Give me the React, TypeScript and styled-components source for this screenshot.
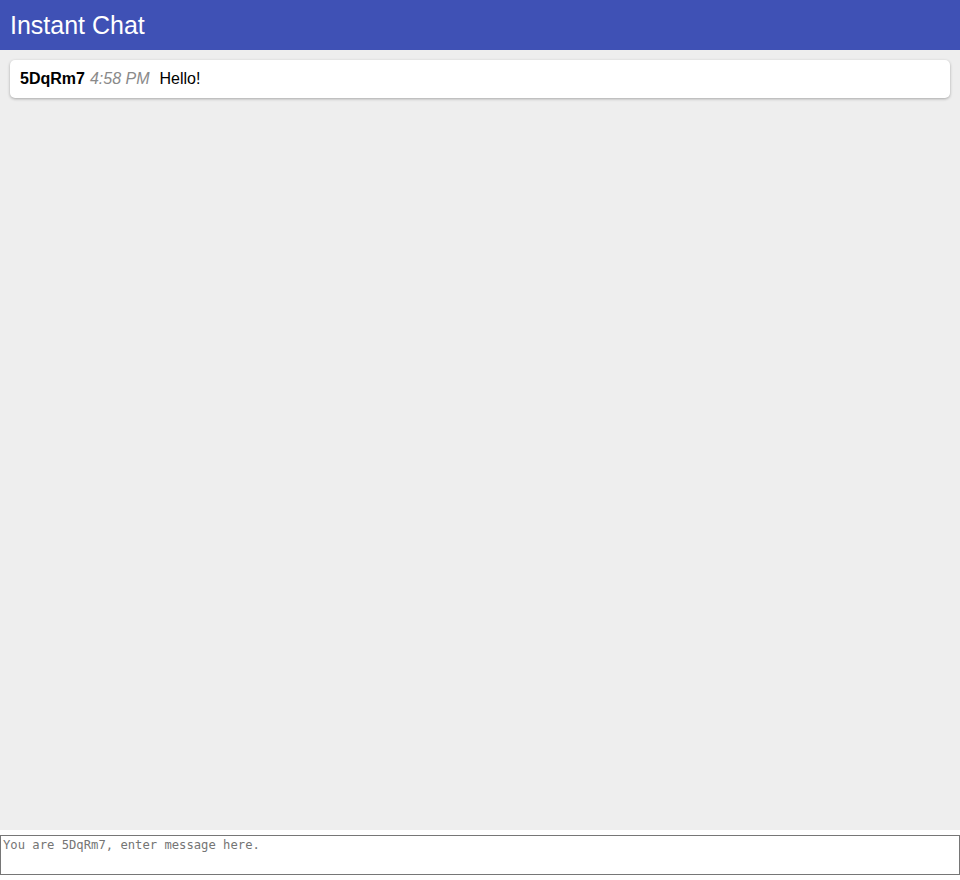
import { createGlobalStyle } from "styled-components";
import styled from "styled-components";

const GlobalStyle = createGlobalStyle`
  html, body {
    margin: 0;
    padding: 0;
    background: #ffffff;
  }
  body {
    font-family: "Liberation Sans", Arial, sans-serif;
  }
`;

const Page = styled.div`
  display: flex;
  flex-direction: column;
  height: 880px;
  width: 960px;
`;

const Header = styled.header`
  height: 50px;
  flex-shrink: 0;
  background: #3f51b5;
  color: #ffffff;
  font-size: 25px;
  line-height: 50px;
  padding: 0 10px;
`;

const Messages = styled.div`
  flex: 1;
  background: #eeeeee;
  padding: 10px;
  display: flex;
  flex-direction: column;
  gap: 10px;
`;

const Message = styled.div`
  background: #ffffff;
  border-radius: 5px;
  box-shadow: 0 1px 3px rgba(0, 0, 0, 0.3);
  padding: 10px;
  font-size: 16px;
  line-height: 18px;
  color: #000000;
  display: flex;
  align-items: baseline;
`;

const Author = styled.span`
  font-weight: bold;
  margin-right: 5px;
`;

const Time = styled.span`
  font-style: italic;
  color: #8a8a8a;
  margin-right: 10px;
`;

const Footer = styled.div`
  flex-shrink: 0;
  padding: 5px 0;
  display: flex;
`;

const Input = styled.textarea`
  box-sizing: border-box;
  width: 960px;
  height: 40px;
  margin: 0;
  padding: 2px;
  border: 1px solid #767676;
  resize: none;
  font-family: "DejaVu Sans Mono", monospace;
  font-size: 12.2px;
  &::placeholder {
    color: #757575;
  }
`;

const messages = [{ author: "5DqRm7", time: "4:58 PM", text: "Hello!" }];

const App = () => {
  return (
    <Page>
      <GlobalStyle />
      <Header>Instant Chat</Header>
      <Messages>
        {messages.map((m, i) => (
          <Message key={i}>
            <Author>{m.author}</Author>
            <Time>{m.time}</Time>
            <span>{m.text}</span>
          </Message>
        ))}
      </Messages>
      <Footer>
        <Input placeholder="You are 5DqRm7, enter message here." />
      </Footer>
    </Page>
  );
};

export default App;
